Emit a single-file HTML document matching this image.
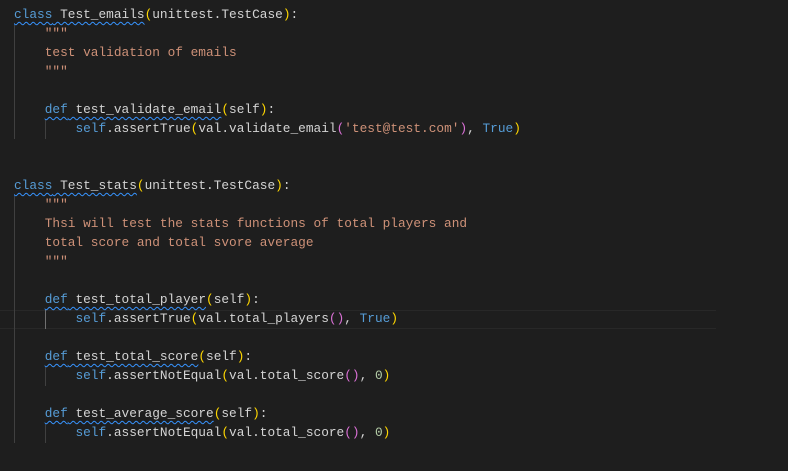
<!DOCTYPE html>
<html><head><style>
html,body{margin:0;padding:0;background:#1e1e1e;width:788px;height:471px;overflow:hidden}
pre{margin:0;position:absolute;left:14px;top:5px;font-family:"Liberation Mono",monospace;font-size:12.8px;line-height:19px;color:#d4d4d4}
.k{color:#569cd6}.s{color:#ce9178}.y{color:#ffd700}.p{color:#da70d6}.b{color:#179fff}.n{color:#b5cea8}
.w{text-decoration:underline wavy #3794ff;text-decoration-thickness:1px;text-underline-offset:3px}
.g{position:absolute;width:1px;background:#404040}
.cl{position:absolute;left:0;width:716px;top:310px;height:17px;border-top:1px solid #282828;border-bottom:1px solid #282828}
</style></head><body>
<div class="cl"></div>
<div class="g" style="left:14px;top:25px;height:114px"></div>
<div class="g" style="left:14px;top:196px;height:247px"></div>
<div class="g" style="left:45px;top:120px;height:19px"></div>
<div class="g" style="left:45px;top:310px;height:19px;background:#707070"></div>
<div class="g" style="left:45px;top:367px;height:19px"></div>
<div class="g" style="left:45px;top:424px;height:19px"></div>
<pre><span class="w"><span class="k">class</span> Test_emails</span><span class="y">(</span>unittest.TestCase<span class="y">)</span>:
    <span class="s">"""</span>
<span class="s">    test validation of emails</span>
<span class="s">    """</span>

    <span class="w"><span class="k">def</span> test_validate_email</span><span class="y">(</span>self<span class="y">)</span>:
        <span class="k">self</span>.assertTrue<span class="y">(</span>val.validate_email<span class="p">(</span><span class="s">'test@test.com'</span><span class="p">)</span>, <span class="k">True</span><span class="y">)</span>


<span class="w"><span class="k">class</span> Test_stats</span><span class="y">(</span>unittest.TestCase<span class="y">)</span>:
    <span class="s">"""</span>
<span class="s">    Thsi will test the stats functions of total players and</span>
<span class="s">    total score and total svore average</span>
<span class="s">    """</span>

    <span class="w"><span class="k">def</span> test_total_player</span><span class="y">(</span>self<span class="y">)</span>:
        <span class="k">self</span>.assertTrue<span class="y">(</span>val.total_players<span class="p">()</span>, <span class="k">True</span><span class="y">)</span>

    <span class="w"><span class="k">def</span> test_total_score</span><span class="y">(</span>self<span class="y">)</span>:
        <span class="k">self</span>.assertNotEqual<span class="y">(</span>val.total_score<span class="p">()</span>, <span class="n">0</span><span class="y">)</span>

    <span class="w"><span class="k">def</span> test_average_score</span><span class="y">(</span>self<span class="y">)</span>:
        <span class="k">self</span>.assertNotEqual<span class="y">(</span>val.total_score<span class="p">()</span>, <span class="n">0</span><span class="y">)</span>
</pre>
</body></html>
